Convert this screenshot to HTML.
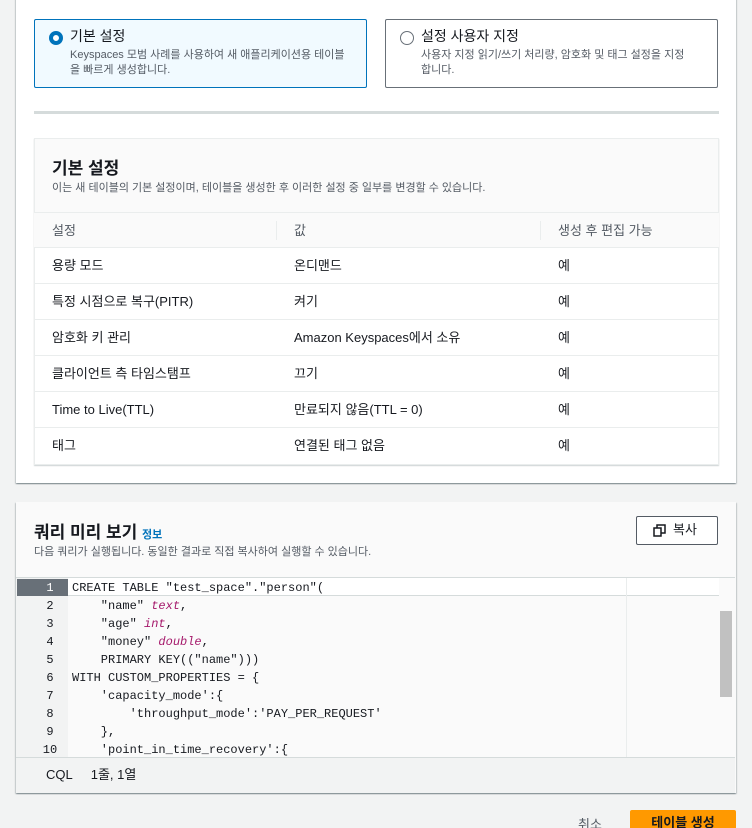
<!DOCTYPE html>
<html><head><meta charset="utf-8"><style>
*{box-sizing:border-box;margin:0;padding:0}
html,body{width:752px;height:828px;overflow:hidden}
body{background:#f2f3f3;font-family:"Liberation Sans","Noto Sans CJK KR",sans-serif;color:#16191f;position:relative}
.abs{position:absolute}
.card{position:absolute;left:16px;width:720px;background:#fff;box-shadow:0 1px 1px rgba(0,28,36,.3),1px 1px 1px rgba(0,28,36,.15),-1px 1px 1px rgba(0,28,36,.15)}
.tile{position:absolute;top:19px;width:333px;height:69px;border:1px solid #687078;border-radius:2px;padding:8px 0 0 35px}
.tile .t{font-size:14px;line-height:17px}
.tile .d{font-size:11px;color:#545b64;line-height:15px;margin-top:3px}
.radio{position:absolute;left:14px;top:11px;width:14px;height:14px;border-radius:50%}
.row{position:absolute;left:34px;width:685px;height:36px;border-top:1px solid #eaeded;font-size:13px;line-height:35px}
.row span{position:absolute}
.code{position:absolute;left:16px;top:577px;width:719px;height:180px;background:#fafafa;border-top:1px solid #d5dbdb;font-family:"Liberation Mono","DejaVu Sans Mono",monospace;font-size:12px;color:#16191f;overflow:hidden}
.ln{position:absolute;left:0;width:52px;text-align:center;font-size:12px;padding-left:16px}
.cl{position:absolute;left:56px;white-space:pre}
.k{color:#a5196b;font-style:italic}
</style></head><body>
<div class="card" style="top:-4px;height:487px"></div>
<div class="tile" style="left:34px;border-color:#0073bb;background:#f1faff">
<div class="radio" style="border:4px solid #0073bb;background:#fff"></div>
<div class="t">기본 설정</div><div class="d">Keyspaces 모범 사례를 사용하여 새 애플리케이션용 테이블<br>을 빠르게 생성합니다.</div></div>
<div class="tile" style="left:385px">
<div class="radio" style="border:1.5px solid #687078;background:#fff"></div>
<div class="t">설정 사용자 지정</div><div class="d">사용자 지정 읽기/쓰기 처리량, 암호화 및 태그 설정을 지정<br>합니다.</div></div>
<div class="abs" style="left:34px;top:111px;width:685px;height:3px;background:#d5dbdb"></div>
<div class="abs" style="left:34px;top:138px;width:685px;height:327px;border:1px solid #eaeded;background:#fff;box-shadow:0 1px 1px rgba(0,28,36,.2)"></div>
<div class="abs" style="left:35px;top:139px;width:683px;height:73px;background:#fafafa"></div>
<div class="abs" style="left:52px;top:154px;font-size:17px;font-weight:bold">기본 설정</div>
<div class="abs" style="left:52px;top:179px;font-size:11px;color:#545b64">이는 새 테이블의 기본 설정이며, 테이블을 생성한 후 이러한 설정 중 일부를 변경할 수 있습니다.</div>
<div class="row" style="top:212px;background:#fafafa;color:#545b64"><span style="left:18px">설정</span><span style="left:242px;top:8px;height:19px;border-left:1px solid #eaeded"></span><span style="left:260px">값</span><span style="left:506px;top:8px;height:19px;border-left:1px solid #eaeded"></span><span style="left:524px">생성 후 편집 가능</span></div>
<div class="row" style="top:247px"><span style="left:18px">용량 모드</span><span style="left:260px">온디맨드</span><span style="left:524px">예</span></div>
<div class="row" style="top:283px"><span style="left:18px">특정 시점으로 복구(PITR)</span><span style="left:260px">켜기</span><span style="left:524px">예</span></div>
<div class="row" style="top:319px"><span style="left:18px">암호화 키 관리</span><span style="left:260px">Amazon Keyspaces에서 소유</span><span style="left:524px">예</span></div>
<div class="row" style="top:355px"><span style="left:18px">클라이언트 측 타임스탬프</span><span style="left:260px">끄기</span><span style="left:524px">예</span></div>
<div class="row" style="top:391px"><span style="left:18px">Time to Live(TTL)</span><span style="left:260px">만료되지 않음(TTL = 0)</span><span style="left:524px">예</span></div>
<div class="row" style="top:427px;height:37px"><span style="left:18px">태그</span><span style="left:260px">연결된 태그 없음</span><span style="left:524px">예</span></div>

<div class="card" style="top:502px;height:291px;background:#fafafa"></div>
<div class="abs" style="left:34px;top:518px;font-size:17px;font-weight:bold">쿼리 미리 보기 <span style="font-size:11px;color:#0073bb;font-weight:bold">정보</span></div>
<div class="abs" style="left:34px;top:543px;font-size:11px;color:#545b64">다음 쿼리가 실행됩니다. 동일한 결과로 직접 복사하여 실행할 수 있습니다.</div>
<div class="abs" style="left:636px;top:516px;width:82px;height:29px;border:1px solid #545b64;border-radius:2px;background:#fff;font-size:13px;color:#16191f;line-height:26px;padding-left:36px">복사
<svg class="abs" style="left:16px;top:7px" width="13" height="13" viewBox="0 0 13 13" fill="none" stroke="#16191f" stroke-width="1.5"><rect x="1" y="4" width="7" height="8"/><path d="M4 4V1h8v8H8"/></svg></div>
<div class="code">
<div class="abs" style="left:0;top:0;width:52px;height:180px;background:#f2f3f3"></div>
<div class="abs" style="left:1px;top:1px;width:51px;height:17px;background:#687078"></div>
<div class="abs" style="left:52px;top:0;width:651px;height:18px;border-bottom:1px solid #d5dbdb;background:#fff"></div>
<div class="abs" style="left:610px;top:0;height:180px;border-left:1px solid #eaeded"></div>
<div class="abs" style="left:703px;top:0;width:16px;height:180px;background:#fafafa"></div>
<div class="abs" style="left:704px;top:33px;width:12px;height:86px;background:#c1c1c1"></div>
<div style="position:absolute;left:0;top:1px;line-height:18px;width:100%">
<div style="position:relative;height:18px"><span class="ln" style="color:#fff">1</span><span class="cl">CREATE TABLE "test_space"."person"(</span></div>
<div style="position:relative;height:18px"><span class="ln">2</span><span class="cl">    "name" <span class="k">text</span>,</span></div>
<div style="position:relative;height:18px"><span class="ln">3</span><span class="cl">    "age" <span class="k">int</span>,</span></div>
<div style="position:relative;height:18px"><span class="ln">4</span><span class="cl">    "money" <span class="k">double</span>,</span></div>
<div style="position:relative;height:18px"><span class="ln">5</span><span class="cl">    PRIMARY KEY(("name")))</span></div>
<div style="position:relative;height:18px"><span class="ln">6</span><span class="cl">WITH CUSTOM_PROPERTIES = {</span></div>
<div style="position:relative;height:18px"><span class="ln">7</span><span class="cl">    'capacity_mode':{</span></div>
<div style="position:relative;height:18px"><span class="ln">8</span><span class="cl">        'throughput_mode':'PAY_PER_REQUEST'</span></div>
<div style="position:relative;height:18px"><span class="ln">9</span><span class="cl">    },</span></div>
<div style="position:relative;height:18px"><span class="ln">10</span><span class="cl">    'point_in_time_recovery':{</span></div>
</div></div>
<div class="abs" style="left:16px;top:757px;width:719px;height:36px;background:#f2f3f3;border-top:1px solid #d5dbdb;font-size:13px;line-height:33px;padding-left:30px">CQL<span style="margin-left:18px">1줄, 1열</span></div>
<div class="abs" style="left:578px;top:814px;font-size:13px;color:#545b64">취소</div>
<div class="abs" style="left:630px;top:810px;width:106px;height:30px;background:#ff9900;border-radius:2px;color:#16191f;font-size:13px;font-weight:bold;text-align:center;line-height:26px">테이블 생성</div>
</body></html>
